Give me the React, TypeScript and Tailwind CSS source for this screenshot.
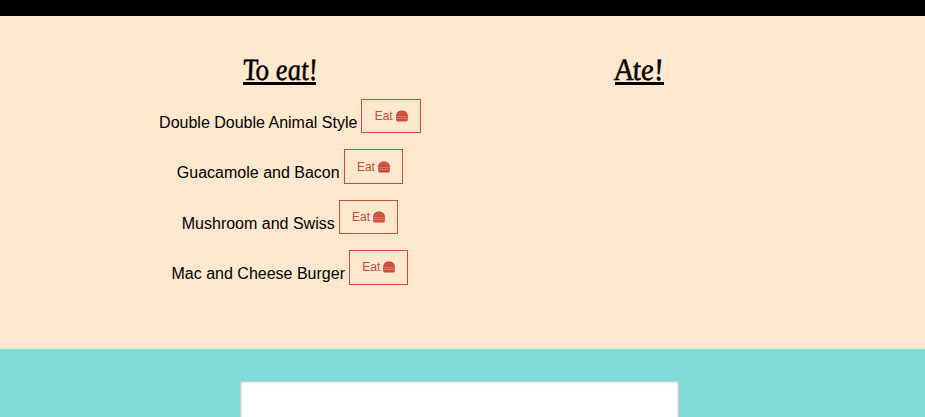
const burgers = [
  { name: "Double Double Animal Style", offset: "pt-[11.5px]" },
  { name: "Guacamole and Bacon", offset: "pt-[11.5px]" },
  { name: "Mushroom and Swiss", offset: "pt-[12px]" },
  { name: "Mac and Cheese Burger", offset: "pt-[11.5px]" },
];

function Heading({ text, width, scale }: { text: string; width: string; scale: string }) {
  return (
    <h2
      className={`mx-auto flex h-[33px] items-end justify-center whitespace-nowrap border-b-[3px] border-black font-['Liberation_Serif',serif] text-[31px] leading-[25px] italic [-webkit-text-stroke:0.5px_black] ${width}`}
    >
      <span className={`inline-block skew-x-[7deg] ${scale}`}>{text}</span>
    </h2>
  );
}

function Burger() {
  return (
    <svg viewBox="0 0 12 12" className="h-3 w-3" fill="currentColor">
      <path d="M0.3 5C0.3 2.3 2.7 0.5 6 0.5S11.7 2.3 11.7 5Z" />
      <path d="M0 5H12V9.5H0Z" opacity="0.7" />
      <path d="M0 5H12V6H0ZM0 7H12V8H0ZM0.3 9H11.7V10.5Q11.4 11.6 10.3 11.6H1.7Q0.6 11.6 0.3 10.5Z" />
      <g fill="#ffe8cd" opacity="0.5">
        <circle cx="3.4" cy="3.2" r="0.45" />
        <circle cx="6" cy="2.2" r="0.45" />
        <circle cx="8.6" cy="3.2" r="0.45" />
      </g>
    </svg>
  );
}

export default function App() {
  return (
    <div className="flex h-[417px] w-[925px] flex-col overflow-hidden bg-[#7fdbda] font-['Liberation_Sans',sans-serif] text-black">
      <div className="h-4 shrink-0 bg-black" />
      <main className="flex h-[333px] shrink-0 bg-[#ffe8cd] pt-9 pl-[100px]">
        <section className="w-[359px]">
          <Heading text="To eat!" width="w-[73px]" scale="scale-x-[.87]" />
          <ul className="ml-5 flex w-[340px] flex-col gap-4 pt-[14px]">
            {burgers.map(({ name, offset }) => (
              <li key={name} className="flex h-[34.4px] items-start justify-center gap-1 whitespace-nowrap text-base leading-6">
                <span className={offset}>{name}</span>
                <button className="flex h-[34.4px] w-[59.5px] items-center justify-center gap-[3px] border border-[#cf4b3b] text-xs text-[#cf4b3b]">
                  Eat
                  <Burger />
                </button>
              </li>
            ))}
          </ul>
        </section>
        <section className="w-[360px]">
          <Heading text="Ate!" width="w-[49px]" scale="scale-x-[.95]" />
        </section>
      </main>
      <div className="mx-auto mt-8 h-[100px] w-[439px] shrink-0 -translate-x-[3px] border border-[#cccccc] bg-white shadow-[inset_0_0_3px_#ccc]" />
    </div>
  );
}
